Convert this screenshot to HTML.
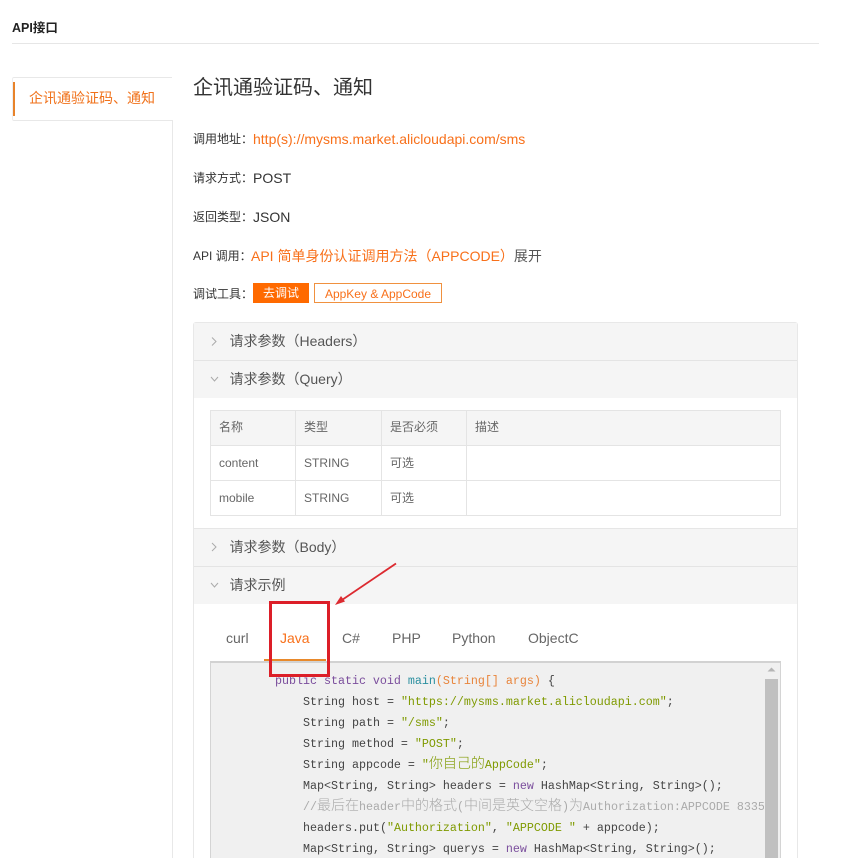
<!DOCTYPE html>
<html lang="zh"><head><meta charset="utf-8"><title>API接口</title>
<style>
html,body{margin:0;padding:0;background:#fff;width:847px;height:858px;overflow:hidden}
body{position:relative;font-family:"Liberation Sans","Noto Sans CJK SC",sans-serif;color:#333}
.a{position:absolute;white-space:pre}
.l{font-size:12px;line-height:18px;left:193px;color:#333}
.v{font-size:14px;line-height:18px;color:#333}
.hd{position:absolute;left:194px;width:603px;height:37px;background:#f5f5f5;border-bottom:1px solid #e4e4e4}
.ht{position:absolute;left:229.5px;font-size:14px;line-height:20px;color:#555;white-space:pre}
.c{position:absolute;font-size:12px;line-height:18px;color:#666}
.t{position:absolute;font-size:14px;line-height:20px;color:#666;top:628px}
.o,.v.o,.t.o{color:#f8701a}
.code{position:absolute;left:210px;top:661px;width:569px;height:197px;background:#f0f0f0;border:1px solid #d4d4d4;border-bottom:0;border-top:2px solid #d2d2d2;overflow:hidden}
.ln{position:absolute;font-family:"Liberation Mono","Noto Serif CJK SC",monospace;font-size:11.67px;line-height:21px;height:21px;color:#444;white-space:pre}
.ln i{font-style:normal;font-family:"Noto Sans CJK SC",sans-serif;font-size:14px;line-height:0;font-weight:300}
.k{color:#7a4d9c}.s{color:#7f9a00}.f{color:#2a8f9f}.p{color:#e8843a}.m{color:#aaa}
</style></head><body>
<div class="a" style="left:12px;top:19px;font-size:12.5px;line-height:18px;font-weight:bold;color:#222">API接口</div>
<div class="a" style="left:12px;top:43px;width:807px;height:1px;background:#e6e6e6"></div>

<div class="a" style="left:12px;top:77px;width:159px;height:42px;border-top:1px solid #e8e8e8;border-bottom:1px solid #e8e8e8;border-left:1px solid #eee;border-radius:2px 0 0 2px"></div>
<div class="a" style="left:172px;top:120px;width:1px;height:738px;background:#e8e8e8"></div>
<div class="a" style="left:13px;top:82px;width:2px;height:34px;background:#e8832a"></div>
<div class="a" style="left:29px;top:88px;font-size:14px;line-height:20px;color:#f0711a">企讯通验证码、通知</div>

<div class="a" style="left:193px;top:74px;font-size:20px;line-height:28px;color:#333">企讯通验证码、通知</div>

<div class="a l" style="top:130px">调用地址：</div><div class="a v o" style="left:253px;top:130px">http(s)://mysms.market.alicloudapi.com/sms</div>
<div class="a l" style="top:169px">请求方式：</div><div class="a v" style="left:253px;top:169px">POST</div>
<div class="a l" style="top:208px">返回类型：</div><div class="a v" style="left:253px;top:208px">JSON</div>
<div class="a l" style="top:247px">API 调用：</div><div class="a v o" style="left:251px;top:247px">API 简单身份认证调用方法（APPCODE）<span style="color:#555">展开</span></div>
<div class="a l" style="top:285px">调试工具：</div>
<div class="a" style="left:253px;top:283px;width:56px;height:20px;background:#ff6a00;color:#fff;font-size:12px;line-height:20px;text-align:center">去调试</div>
<div class="a o" style="left:314px;top:283px;width:126px;height:18px;border:1px solid #f0913f;font-size:12px;line-height:20px;text-align:center">AppKey &amp; AppCode</div>

<div class="a" style="left:193px;top:322px;width:603px;height:536px;border:1px solid #e8e8e8;border-bottom:0;border-radius:3px 3px 0 0"></div>
<div class="hd" style="top:323px"></div>
<div class="hd" style="top:361px;border-bottom:0"></div>
<div class="a" style="left:194px;top:528px;width:603px;height:1px;background:#e6e6e6"></div>
<div class="hd" style="top:529px"></div>
<div class="hd" style="top:567px;border-bottom:0"></div>

<svg class="a" style="left:205px;top:335px" width="20" height="260" fill="none" stroke="#aaa" stroke-width="1">
<path d="M7 2.500L11 6.500L7 10.500"/>
<path d="M6 42L9.500 46L13 42"/>
<path d="M7 208L11 212L7 216"/>
<path d="M6 248L9.500 252L13 248"/>
</svg>
<div class="ht" style="top:331px">请求参数（Headers）</div>
<div class="ht" style="top:369px">请求参数（Query）</div>
<div class="ht" style="top:537px">请求参数（Body）</div>
<div class="ht" style="top:575px">请求示例</div>

<div class="a" style="left:210px;top:410px;width:570px;height:35px;background:#f5f5f5"></div>
<svg class="a" style="left:210px;top:410px" width="572" height="107" stroke="#e4e4e4" stroke-width="1">
<path d="M.5 0V106M85.500 0V106M171.500 0V106M256.500 0V106M570.500 0V106M0 .5H571M0 35.500H571M0 70.500H571M0 105.500H571" fill="none"/>
</svg>
<div class="c" style="left:219px;top:418px">名称</div><div class="c" style="left:304px;top:418px">类型</div><div class="c" style="left:390px;top:418px">是否必须</div><div class="c" style="left:475px;top:418px">描述</div>
<div class="c" style="left:219px;top:454px">content</div><div class="c" style="left:304px;top:454px">STRING</div><div class="c" style="left:390px;top:454px">可选</div>
<div class="c" style="left:219px;top:489px">mobile</div><div class="c" style="left:304px;top:489px">STRING</div><div class="c" style="left:390px;top:489px">可选</div>

<div class="t" style="left:226px">curl</div>
<div class="t o" style="left:280px">Java</div>
<div class="t" style="left:342px">C#</div>
<div class="t" style="left:392px">PHP</div>
<div class="t" style="left:452px">Python</div>
<div class="t" style="left:528px">ObjectC</div>
<div class="a" style="left:264px;top:659px;width:62px;height:2px;background:#e8892b"></div>

<div class="code"></div>
<div class="ln" style="left:275px;top:671px"><span class="k">public static void</span> <span class="f">main</span><span class="p">(String[] args)</span> {</div>
<div class="ln" style="left:303px;top:692px">String host = <span class="s">"https://mysms.market.alicloudapi.com"</span>;</div>
<div class="ln" style="left:303px;top:713px">String path = <span class="s">"/sms"</span>;</div>
<div class="ln" style="left:303px;top:734px">String method = <span class="s">"POST"</span>;</div>
<div class="ln" style="left:303px;top:755px">String appcode = <span class="s">"<i>你自己的</i>AppCode"</span>;</div>
<div class="ln" style="left:303px;top:776px">Map&lt;String, String&gt; headers = <span class="k">new</span> HashMap&lt;String, String&gt;();</div>
<div class="ln m" style="left:303px;top:797px;width:461px;overflow:hidden">//<i>最后在</i>header<i>中的格式</i>(<i>中间是英文空格</i>)<i>为</i>Authorization:APPCODE 83359fd73fe</div>
<div class="ln" style="left:303px;top:818px">headers.put(<span class="s">"Authorization"</span>, <span class="s">"APPCODE "</span> + appcode);</div>
<div class="ln" style="left:303px;top:839px">Map&lt;String, String&gt; querys = <span class="k">new</span> HashMap&lt;String, String&gt;();</div>

<div class="a" style="left:765px;top:679px;width:13px;height:179px;background:#c0c0c0"></div>
<svg class="a" style="left:766px;top:666px" width="11" height="7"><path d="M1.500 5.500L5.500 1.500L9.500 5.500Z" fill="#b5b5b5"/></svg>

<div class="a" style="left:269px;top:601px;width:55px;height:70px;border:3px solid #dc1e28"></div>
<svg class="a" style="left:330px;top:558px" width="72" height="52" fill="none">
<path d="M66 5.500L9 44" stroke="#dc2a30" stroke-width="1.800"/>
<path d="M5 47L15 43.500L11 38Z" fill="#dc2a30"/>
</svg>
</body></html>
